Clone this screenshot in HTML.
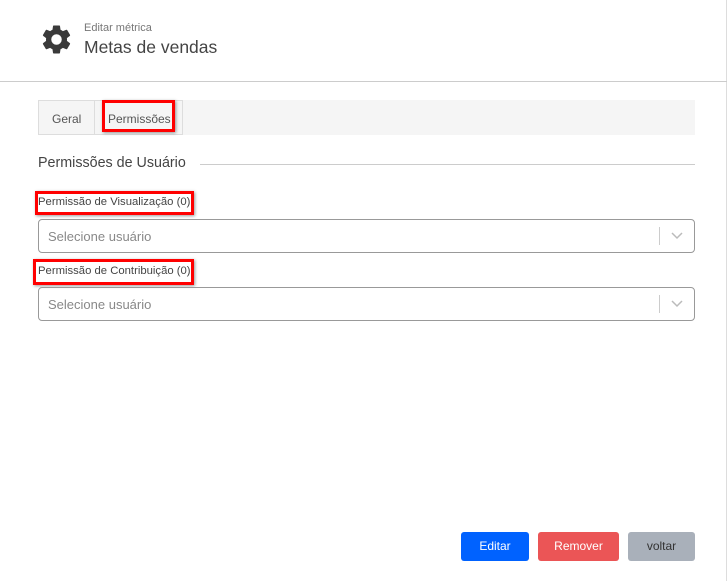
<!DOCTYPE html>
<html><head><meta charset="utf-8"><style>
*{box-sizing:border-box;margin:0;padding:0}
body{width:728px;height:581px;background:#fff;font-family:"Liberation Sans",sans-serif;color:#444;position:relative;overflow:hidden}
.abs{position:absolute}
.redbox{position:absolute;border:3px solid #f00;box-shadow:1px 1px 3px rgba(0,0,0,.4)}
.sel{position:absolute;left:38px;width:657px;height:34px;border:1px solid #999;border-radius:4px;font-size:13px;color:#888;padding:9px 0 0 9px}
.sel .bar{position:absolute;right:34px;top:7px;width:1px;height:18px;background:#ccc}
.sel svg{position:absolute;right:11px;top:12px}
.btn{position:absolute;top:532px;height:29px;border-radius:3px;font-size:12px;text-align:center;line-height:28px}
</style></head><body>
<div class="abs" style="right:1px;top:0;width:1px;height:581px;background:#ddd"></div>
<svg class="abs" style="left:39px;top:22px" width="35" height="35" viewBox="0 0 24 24"><path fill="#3a3a3a" d="M19.14 12.94c.04-.3.06-.61.06-.94s-.02-.64-.07-.94l2.03-1.58a.49.49 0 0 0 .12-.61l-1.92-3.32a.49.49 0 0 0-.59-.22l-2.39.96c-.5-.38-1.030-.7-1.62-.94l-.36-2.54a.48.48 0 0 0-.48-.41h-3.84a.48.48 0 0 0-.47.41l-.36 2.54c-.59.24-1.13.57-1.62.94l-2.39-.96a.48.48 0 0 0-.59.22L2.74 8.87a.47.47 0 0 0 .12.61l2.03 1.58c-.05.3-.09.63-.09.94s.02.64.07.94l-2.030 1.58a.49.49 0 0 0-.12.61l1.92 3.32c.12.22.37.29.59.22l2.39-.96c.5.38 1.03.7 1.62.94l.36 2.54c.05.24.24.41.48.41h3.84c.24 0 .44-.17.47-.41l.36-2.54c.59-.24 1.13-.56 1.62-.94l2.39.96c.22.08.47 0 .59-.22l1.92-3.32a.47.47 0 0 0-.12-.61l-2.01-1.58zM12 15.6A3.6 3.6 0 1 1 12 8.4a3.6 3.6 0 0 1 0 7.2z"/></svg>
<div class="abs" style="left:84px;top:22px;font-size:11px;color:#777">Editar métrica</div>
<div class="abs" style="left:84px;top:37px;font-size:17.5px;color:#444">Metas de vendas</div>
<div class="abs" style="left:0;top:81px;width:727px;height:1px;background:#ccc"></div>
<div class="abs" style="left:38px;top:100px;width:657px;height:35px;background:#f5f5f5"></div>
<div class="abs" style="left:38px;top:100px;width:57px;height:35px;border:1px solid #ddd;font-size:12px;padding:11px 0 0 13px;color:#555">Geral</div>
<div class="abs" style="left:94px;top:100px;width:89px;height:35px;border:1px solid #ddd;font-size:12px;padding:11px 0 0 13px;color:#555">Permissões</div>
<div class="redbox" style="left:102px;top:100px;width:73px;height:32px"></div>
<div class="abs" style="left:38px;top:155px;font-size:14.3px;color:#444">Permissões de Usuário</div>
<div class="abs" style="left:200px;top:164px;width:495px;height:1px;background:#ccc"></div>
<div class="abs" style="left:38px;top:196px;font-size:11.3px;color:#444">Permissão de Visualização (0)</div>
<div class="redbox" style="left:35px;top:191px;width:159px;height:24px"></div>
<div class="sel" style="top:219px">Selecione usuário<div class="bar"></div><svg width="12" height="8" viewBox="0 0 12 8"><path d="M1 1l5 5 5-5" fill="none" stroke="#bbb" stroke-width="1.5"/></svg></div>
<div class="abs" style="left:38px;top:265px;font-size:11.3px;color:#444">Permissão de Contribuição (0)</div>
<div class="redbox" style="left:33px;top:259px;width:161px;height:26px"></div>
<div class="sel" style="top:287px">Selecione usuário<div class="bar"></div><svg width="12" height="8" viewBox="0 0 12 8"><path d="M1 1l5 5 5-5" fill="none" stroke="#bbb" stroke-width="1.5"/></svg></div>
<div class="btn" style="left:461px;width:68px;background:#0062ff;color:#fff">Editar</div>
<div class="btn" style="left:538px;width:81px;background:#eb5556;color:#fff">Remover</div>
<div class="btn" style="left:628px;width:67px;background:#a9b0ba;color:#333">voltar</div>
</body></html>
